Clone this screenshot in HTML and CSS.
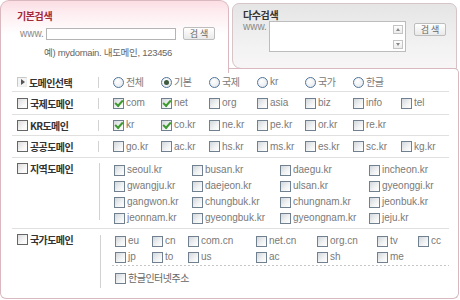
FILE: index.html
```html
<!DOCTYPE html>
<html lang="ko">
<head>
<meta charset="utf-8">
<title>도메인 검색</title>
<link rel="stylesheet" href="styles.css">
</head>
<body>
<div class="box">
  <div class="top">
    <div class="tab-basic">
      <div class="tab-title red">기본검색</div>
      <div class="search-line">
        <span class="www">www.</span>
        <span class="input"></span>
        <span class="btn">검색</span>
      </div>
      <div class="example">예) mydomain. 내도메인, 123456</div>
    </div>
    <div class="tab-side">
      <div class="multi">
        <div class="tab-title">다수검색</div>
        <div class="multi-line">
          <span class="www">www.</span>
          <span class="textarea">
            <span class="scroll">
              <span class="sbtn up"></span>
              <span class="sbtn down"></span>
            </span>
          </span>
          <span class="btn">검색</span>
        </div>
      </div>
      <div class="side-foot"></div>
    </div>
  </div>

  <div class="panel">
    <div class="row r1">
      <div class="label"><span class="arrow"></span>도메인선택</div>
      <span class="sep"></span>
      <div class="items">
        <span class="item"><span class="rd"></span><span class="ko">전체</span></span>
        <span class="item"><span class="rd on"></span><span class="ko">기본</span></span>
        <span class="item"><span class="rd"></span><span class="ko">국제</span></span>
        <span class="item"><span class="rd"></span>kr</span>
        <span class="item"><span class="rd"></span><span class="ko">국가</span></span>
        <span class="item"><span class="rd"></span><span class="ko">한글</span></span>
      </div>
    </div>

    <div class="row r2">
      <div class="label"><span class="lcb"></span>국제도메인</div>
      <span class="sep"></span>
      <div class="items">
        <span class="item"><span class="cb on"></span>com</span>
        <span class="item"><span class="cb on"></span>net</span>
        <span class="item"><span class="cb"></span>org</span>
        <span class="item"><span class="cb"></span>asia</span>
        <span class="item"><span class="cb"></span>biz</span>
        <span class="item"><span class="cb"></span>info</span>
        <span class="item"><span class="cb"></span>tel</span>
      </div>
    </div>

    <div class="row r3">
      <div class="label"><span class="lcb"></span>KR도메인</div>
      <span class="sep"></span>
      <div class="items">
        <span class="item"><span class="cb on"></span>kr</span>
        <span class="item"><span class="cb on"></span>co.kr</span>
        <span class="item"><span class="cb"></span>ne.kr</span>
        <span class="item"><span class="cb"></span>pe.kr</span>
        <span class="item"><span class="cb"></span>or.kr</span>
        <span class="item"><span class="cb"></span>re.kr</span>
      </div>
    </div>

    <div class="row r4">
      <div class="label"><span class="lcb"></span>공공도메인</div>
      <span class="sep"></span>
      <div class="items">
        <span class="item"><span class="cb"></span>go.kr</span>
        <span class="item"><span class="cb"></span>ac.kr</span>
        <span class="item"><span class="cb"></span>hs.kr</span>
        <span class="item"><span class="cb"></span>ms.kr</span>
        <span class="item"><span class="cb"></span>es.kr</span>
        <span class="item"><span class="cb"></span>sc.kr</span>
        <span class="item"><span class="cb"></span>kg.kr</span>
      </div>
    </div>

    <div class="row r5">
      <div class="label"><span class="lcb"></span>지역도메인</div>
      <span class="sep tall5"></span>
      <div class="items local">
        <span class="item"><span class="cb"></span>seoul.kr</span>
        <span class="item"><span class="cb"></span>busan.kr</span>
        <span class="item"><span class="cb"></span>daegu.kr</span>
        <span class="item"><span class="cb"></span>incheon.kr</span>
        <span class="item"><span class="cb"></span>gwangju.kr</span>
        <span class="item"><span class="cb"></span>daejeon.kr</span>
        <span class="item"><span class="cb"></span>ulsan.kr</span>
        <span class="item"><span class="cb"></span>gyeonggi.kr</span>
        <span class="item"><span class="cb"></span>gangwon.kr</span>
        <span class="item"><span class="cb"></span>chungbuk.kr</span>
        <span class="item"><span class="cb"></span>chungnam.kr</span>
        <span class="item"><span class="cb"></span>jeonbuk.kr</span>
        <span class="item"><span class="cb"></span>jeonnam.kr</span>
        <span class="item"><span class="cb"></span>gyeongbuk.kr</span>
        <span class="item"><span class="cb"></span>gyeongnam.kr</span>
        <span class="item"><span class="cb"></span>jeju.kr</span>
      </div>
    </div>

    <div class="row r6">
      <div class="label"><span class="lcb"></span>국가도메인</div>
      <span class="sep tall6"></span>
      <div class="country">
        <div class="items nation">
          <span class="item"><span class="cb"></span>eu</span>
          <span class="item"><span class="cb"></span>cn</span>
          <span class="item"><span class="cb"></span>com.cn</span>
          <span class="item"><span class="cb"></span>net.cn</span>
          <span class="item"><span class="cb"></span>org.cn</span>
          <span class="item"><span class="cb"></span>tv</span>
          <span class="item"><span class="cb"></span>cc</span>
          <span class="item"><span class="cb"></span>jp</span>
          <span class="item"><span class="cb"></span>to</span>
          <span class="item"><span class="cb"></span>us</span>
          <span class="item"><span class="cb"></span>ac</span>
          <span class="item"><span class="cb"></span>sh</span>
          <span class="item"><span class="cb"></span>me</span>
        </div>
        <div class="dash"></div>
        <div class="item hangul"><span class="cb"></span><span class="ko">한글인터넷주소</span></div>
      </div>
    </div>
  </div>
</div>
</body>
</html>
```

FILE: styles.css
```css
* { box-sizing: border-box; }
html, body { margin: 0; padding: 0; background: #fff; }
body {
  width: 460px;
  height: 300px;
  overflow: hidden;
  font-family: "Liberation Sans", "Noto Sans CJK KR", sans-serif;
  font-size: 10px;
  color: #777;
}
.ko { font-family: "Noto Sans CJK KR", sans-serif; letter-spacing: -0.5px; }

.box { width: 459px; }

/* ---------- top tabs ---------- */
.top { display: flex; height: 73px; }

.tab-basic {
  width: 229px;
  border: 1px solid #d9b9bf;
  border-bottom: 0;
  border-radius: 9px 9px 0 0;
  background: linear-gradient(#fbdee4 0, #fdedf0 12px, #fff 34px);
  padding: 9px 0 0 16px;
}
.tab-title {
  font-family: "Noto Sans CJK KR", sans-serif;
  font-weight: bold;
  font-size: 10px;
  line-height: 12px;
  letter-spacing: -0.4px;
  color: #333;
}
.tab-title.red { color: #a3283a; }

.search-line {
  display: flex;
  align-items: center;
  height: 13px;
  margin-top: 5px;
}
.www {
  width: 26px;
  color: #888;
  line-height: 10px;
}
.search-line .www { margin-left: 3px; }
.input {
  width: 130px;
  height: 12px;
  border: 1px solid #b4b4b4;
  background: #fff;
}
.btn {
  width: 32px;
  height: 13px;
  margin-left: 7px;
  border: 1px solid #bdbdbd;
  border-radius: 2px;
  background: linear-gradient(#ffffff, #e9e9e9);
  font-family: "Noto Sans CJK KR", sans-serif;
  font-size: 9px;
  line-height: 11px;
  letter-spacing: 2px;
  text-indent: 2px;
  color: #666;
  text-align: center;
}
.example {
  margin-top: 7px;
  padding-left: 27px;
  line-height: 12px;
  font-size: 9.5px;
  letter-spacing: -0.3px;
  color: #666;
}

.tab-side { flex: 1; display: flex; flex-direction: column; }
.multi {
  height: 66px;
  margin: 3px 2px -1px 3px;
  border: 1px solid #d6c4c7;
  border-radius: 7px 7px 0 9px;
  background: linear-gradient(#e5e5e5, #f3f3f3 70%, #f8f5f6);
  padding: 5px 0 0 10px;
}
.multi-line {
  display: flex;
  align-items: flex-start;
  margin-top: 0;
}
.multi-line .www { margin-top: 1px; }
.textarea {
  width: 137px;
  height: 31px;
  border: 1px solid #bcbcbc;
  background: #fff;
  display: flex;
  justify-content: flex-end;
}
.scroll {
  width: 12px;
  padding: 3px 1px 2px 0;
  display: flex;
  flex-direction: column;
  justify-content: space-between;
}
.sbtn {
  width: 10px;
  height: 9px;
  border: 1px solid #c4c4c4;
  background: linear-gradient(#fdfdfd, #ececec);
  display: flex;
  align-items: center;
  justify-content: center;
}
.sbtn::after { content: ""; width: 0; height: 0; border-left: 2.5px solid transparent; border-right: 2.5px solid transparent; }
.sbtn.up::after { border-bottom: 3px solid #888; }
.sbtn.down::after { border-top: 3px solid #888; }
.multi-line .btn { margin-left: 8px; margin-top: 2px; }

.side-foot {
  flex: 1;
  border-top: 1px solid #d9b9bf;
  border-right: 1px solid #d9b9bf;
  border-top-right-radius: 5px;
}

/* ---------- panel ---------- */
.panel {
  height: 226px;
  border: 1px solid #d9b9bf;
  border-top: 0;
  border-radius: 0 0 6px 6px;
  padding: 0 9px 0 11px;
}
.row {
  display: flex;
  align-items: center;
  border-bottom: 1px solid #e0e0e0;
}
.r1 { height: 19px; }
.r2 { height: 23px; }
.r3 { height: 21px; }
.r4 { height: 22px; }
.r5 { height: 71px; align-items: flex-start; padding-top: 4px; }
.r6 { border-bottom: 0; align-items: flex-start; padding-top: 4px; }

.label {
  width: 88px;
  padding-left: 5px;
  display: flex;
  align-items: center;
  height: 12px;
  font-family: "Noto Sans CJK KR", sans-serif;
  font-weight: bold;
  font-size: 10px;
  letter-spacing: -0.6px;
  color: #333;
}
.arrow {
  width: 10px;
  height: 10px;
  margin-right: 2px;
  border: 1px solid #c8c8c8;
  border-right-color: #eee;
  border-bottom-color: #eee;
  background: #f4f4f4;
  display: flex;
  align-items: center;
  justify-content: center;
}
.arrow::after {
  content: "";
  width: 0; height: 0;
  border-left: 4px solid #555;
  border-top: 3px solid transparent;
  border-bottom: 3px solid transparent;
  margin-left: 1px;
}
.lcb {
  width: 11px;
  height: 11px;
  margin-right: 2px;
  border: 1px solid #666;
  background: linear-gradient(135deg, #dcdcdc, #fafafa 70%);
}
.sep {
  width: 1px;
  height: 11px;
  background: #d2d2d2;
  margin-right: 14px;
}
.sep.tall5 { height: 57px; margin-top: 1px; }
.sep.tall6 { height: 53px; margin-top: 2px; }

.items {
  display: grid;
  grid-template-columns: repeat(7, 48px);
  align-items: center;
}
.item {
  display: flex;
  align-items: center;
  line-height: 16px;
  color: #7a7a7a;
  white-space: nowrap;
}
.cb {
  width: 11px;
  height: 11px;
  margin-right: 2px;
  flex: none;
  border: 1px solid #71808e;
  background: linear-gradient(135deg, #d3d8dd, #f2f3f4 60%, #fff);
  display: inline-flex;
  align-items: center;
  justify-content: center;
}
.cb.on::after {
  content: "";
  width: 6px;
  height: 3px;
  margin-top: -2px;
  border-left: 2px solid #3f9a2f;
  border-bottom: 2px solid #3f9a2f;
  transform: rotate(-48deg);
}
.rd {
  width: 11px;
  height: 11px;
  margin-right: 2px;
  flex: none;
  border: 1px solid #4f749c;
  border-radius: 50%;
  background: radial-gradient(circle at 40% 35%, #fff, #e1e5ea);
  display: inline-flex;
  align-items: center;
  justify-content: center;
}
.rd.on::after {
  content: "";
  width: 5px;
  height: 5px;
  border-radius: 50%;
  background: #3e5a3c;
}

.items.local {
  grid-template-columns: 78px 88px 89px 80px;
  grid-auto-rows: 16px;
}
.country {
  flex: 1;
  margin-left: -3px;
}
.items.nation {
  padding-left: 3px;
  grid-template-columns: 37px 36px 68px 61px 60px 41px 30px;
  grid-auto-rows: 16px;
}
.dash {
  height: 1px;
  background: repeating-linear-gradient(90deg, #c6c6c6 0 2px, transparent 2px 4px);
}
.item.hangul {
  margin-top: 4px;
  padding-left: 3px;
  color: #666;
}
```
